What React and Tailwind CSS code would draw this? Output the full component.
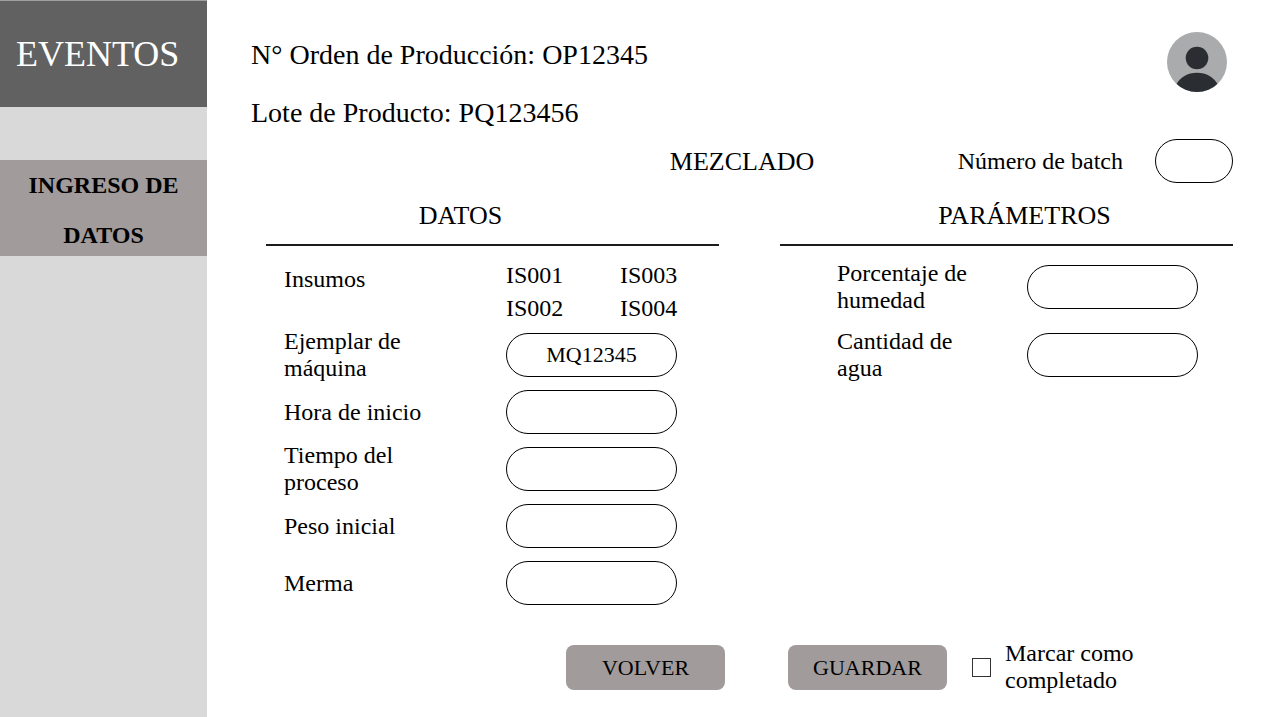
import React from "react";

const pill =
  "h-11 shrink-0 rounded-full border border-black bg-white px-4 text-center text-[22px] text-black outline-none";

function Field({ id, label, defaultValue }) {
  return (
    <div className="flex h-11 items-center justify-between">
      <label htmlFor={id} className="w-36">
        {label}
      </label>
      <input id={id} type="text" defaultValue={defaultValue} className={`${pill} w-[171px]`} />
    </div>
  );
}

function Avatar() {
  return (
    <svg viewBox="0 0 60 60" className="size-[60px]" aria-hidden="true">
      <defs>
        <clipPath id="avatar-clip">
          <circle cx="30" cy="30" r="30" />
        </clipPath>
      </defs>
      <circle cx="30" cy="30" r="30" fill="#a9abad" />
      <g clipPath="url(#avatar-clip)" fill="#2a2e33">
        <circle cx="30" cy="26" r="11.3" />
        <path d="M9 53C13 45 20.500 40.700 30 40.700S47 45 51 53V61H9Z" />
      </g>
    </svg>
  );
}

const insumos = ["IS001", "IS003", "IS002", "IS004"];

export default function App() {
  return (
    <div className="flex min-h-screen bg-white font-['Liberation_Serif',serif] text-2xl leading-[27px] text-black">
      <aside className="w-[207px] shrink-0 bg-[#d9d9d9]">
        <div className="flex h-[107px] items-center border-t border-[#a0a0a0] bg-[#616161] pl-4 text-4xl text-white">
          EVENTOS
        </div>
        <nav className="mt-[53px]">
          <a
            href="#datos"
            className="block h-24 bg-[#a19b9b] px-6 text-center font-bold leading-[50px]"
          >
            INGRESO DE DATOS
          </a>
        </nav>
      </aside>

      <main className="flex-1 pt-8 pr-[33px] pl-11">
        <header className="flex items-start justify-between pr-[6px]">
          <div className="flex flex-col gap-[26px] pt-[7px] text-[28px] leading-8">
            <p>N° Orden de Producción: OP12345</p>
            <p>Lote de Producto: PQ123456</p>
          </div>
          <button type="button" aria-label="Perfil" className="rounded-full">
            <Avatar />
          </button>
        </header>

        <form>
          <div className="mt-[10px] grid grid-cols-[1fr_auto_1fr] items-center">
            <h1 className="col-start-2 text-[26px]">MEZCLADO</h1>
            <div className="flex items-center justify-end gap-8">
              <label htmlFor="batch">Número de batch</label>
              <input id="batch" type="text" className={`${pill} w-[78px]`} />
            </div>
          </div>

          <div className="mt-[17px] grid grid-cols-2 gap-[61px] pl-[15px]">
            <section id="datos">
              <h2 className="border-b-2 border-[#1c1c1f] pr-16 pb-3 text-center text-[26px] leading-8">
                DATOS
              </h2>
              <div className="pt-[13px] pr-[42px] pl-[18px]">
                <div className="flex justify-between">
                  <span className="pt-[7px]">Insumos</span>
                  <ul className="grid w-[171px] grid-cols-[114px_1fr] leading-[33px]">
                    {insumos.map((code) => (
                      <li key={code}>{code}</li>
                    ))}
                  </ul>
                </div>
                <div className="mt-2 flex flex-col gap-[13px]">
                  <Field id="maquina" label="Ejemplar de máquina" defaultValue="MQ12345" />
                  <Field id="hora" label="Hora de inicio" />
                  <Field id="tiempo" label="Tiempo del proceso" />
                  <Field id="peso" label="Peso inicial" />
                  <Field id="merma" label="Merma" />
                </div>
              </div>
            </section>

            <section>
              <h2 className="border-b-2 border-[#1c1c1f] pb-3 pl-9 text-center text-[26px] leading-8">
                PARÁMETROS
              </h2>
              <div className="flex flex-col gap-6 pt-[19px] pr-[35px] pl-[57px]">
                <Field id="humedad" label="Porcentaje de humedad" />
                <Field id="agua" label="Cantidad de agua" />
              </div>
            </section>
          </div>

          <div className="mt-[35px] flex items-center justify-end pr-[84px]">
            <div className="flex gap-[63px] text-[22px]">
              <button type="button" className="h-[45px] w-[159px] rounded-lg bg-[#a19b9b]">
                VOLVER
              </button>
              <button type="submit" className="h-[45px] w-[159px] rounded-lg bg-[#a19b9b]">
                GUARDAR
              </button>
            </div>
            <input
              id="completado"
              type="checkbox"
              className="ml-[25px] size-[19px] appearance-none border border-[#333333] bg-white checked:bg-[#616161]"
            />
            <label htmlFor="completado" className="w-[158px] pl-[14px]">
              Marcar como completado
            </label>
          </div>
        </form>
      </main>
    </div>
  );
}
